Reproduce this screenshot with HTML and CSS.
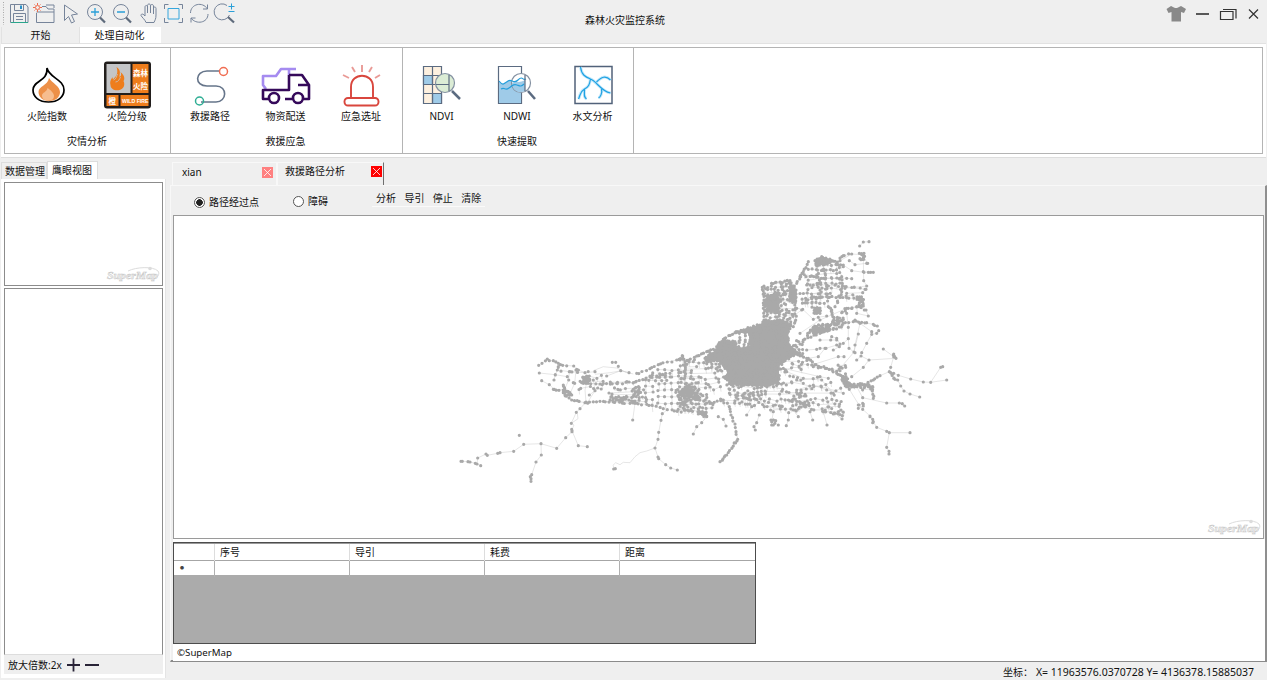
FILE: index.html
```html
<!DOCTYPE html>
<html lang="zh-CN">
<head>
<meta charset="utf-8">
<title>森林火灾监控系统</title>
<link rel="stylesheet" href="styles.css">
</head>
<body>
<header class="titlebar">
  <div class="lead">
    <div class="quick">
      <svg width="240" height="27" viewBox="0 0 240 27" fill="none" stroke="#76849a" stroke-width="1">
        <path d="M3.500 2v23" stroke="#a8a8a8" stroke-dasharray="1 1.500"/>
        <path d="M10.500 4.500H26l2 2.500v15.500H10.500z"/><path d="M14.500 4.500v6h9v-6M13.500 22v-8.500h12V22M16 16.500h7M16 19.500h7"/><path d="M11 22.500h17" stroke="#2aa58c"/><path d="M21 5.500v3.500" stroke="#2a90c8" stroke-width="2"/>
        <path d="M36.500 13v9.500h17.500v-13.500h-6l-2-2.500h-4M36.500 12h17.500M46 5h8v3"/><g stroke="#ee6b4d"><circle cx="37.500" cy="7.500" r="2"/><path d="M37.500 3v2m0 5v2M33 7.500h2m5 0h2M34.500 4.500l1 1m4 4l1 1m0-6l-1 1m-4 4l-1 1"/></g>
        <path d="M64.500 5l13 9-6 1 3 6.500-3 1.500-3-6.500-4 4z"/>
        <g><circle cx="95" cy="12" r="7.500"/><circle cx="121" cy="12" r="7.500"/><path d="M100 17.500l5 5M126 17.500l5 5" stroke="#5f6b7c" stroke-width="2.200"/><path d="M91 12h8m-4-4v8M117 12h8" stroke="#2a9fd8" stroke-width="1.300"/></g>
        <path d="M144 22.500c-1-3-4-5-5-7 0-2 2-2 4 .5V7c0-2 2.500-2 2.500 0v6V5.500c0-2 3-2 3 0V13V6c0-2 3-2 3 0v8V8.500c0-2 2.500-2 2.500 0V15C154 19 153 20 152 22.500z" transform="translate(2 0)"/>
        <path d="M164.500 9V4.500h4m10 0h4V9m0 9v4.500h-4m-10 0h-4V18"/><path d="M168 8.500h11v10.500h-11z" stroke="#35a6dd"/>
        <path d="M190.500 13c0-9 12-12 17-4m0-4.500V9h-4.500M208 14c0 9-12 11-17 4m0 4.500V18h4.500"/>
        <g transform="translate(1 0)"><path d="M226 5.500a8 8 0 1 0 2.500 9.500"/><path d="M227 17l6 5.500" stroke="#5f6b7c" stroke-width="2.200"/><path d="M227.500 6.500h6m-3-3v6m-3 2h6" stroke="#2a9fd8"/></g>
      </svg>
    </div>
    <nav class="ribbon-tabs"><span>开始</span><span class="on">处理自动化</span></nav>
  </div>
  <h1>森林火灾监控系统</h1>
  <svg class="win" width="105" height="28" viewBox="0 0 105 28" fill="none" stroke="#333" stroke-width="1.200">
    <path d="M10 6l3 1.500q2 1 4 0L20 6l5 3-2 4-3-1v9.500h-9.500v-9.500l-3 1-2-4z" fill="#898989" stroke="none"/>
    <path d="M35 14h13" stroke-width="1.600"/><path d="M59.500 11.500h12.500v8H59.500z"/><path d="M62 9.500h13v9"/><path d="M88 9.500l9 9m0-9l-9 9"/>
  </svg>
</header>

<section class="ribbon"><div class="ribbon-in">
  <div class="group g1">
    <div class="tools">
      <div class="tool"><svg viewBox="0 0 48 48"><path d="M23 7c2 10 17 11 17 22 0 7-6 12-15.500 12S9 36 9 29c0-10 15-8 14-22z" transform="translate(1 0)" fill="#fff" stroke="#000" stroke-width="1.700"/><path d="M26 17c3 5 11 8 11 14 0 5-4 9-11 9-6 0-10.500-4-10.500-9 0-6 9-6 10.500-14z" fill="#ed9048"/><path d="M24.500 27c3 2 6.500 5 6.500 8s-2 4.500-6 4.500-6-2-6-5 5-3.500 5.500-7.500z" fill="#f6bd8f"/></svg><span>火险指数</span></div>
      <div class="tool"><svg viewBox="0 0 48 48"><g transform="translate(.5 0)"><rect x=".5" y=".5" width="47" height="47" rx="3" fill="#221e1c"/><path d="M3 3h24v29H3z" fill="#c4c5c7"/><path d="M29 3h16v29H29zM3 34h12v11H3zM17 34h28v11H17z" fill="#ee7d1c"/><path d="M13 6c5 3 3 7 3 10 2-1 2-3 1-5 5 4 4 8 3 9 2 4 0 8-4 9-5 1-9-1-9-5-1-4 1-6 2-8 0 1 0 2 1 2 3-3 5-6 3-12z" fill="#ee7d1c"/><path d="M10 19c3-1 3-4 4-6m-2 8c3 0 4-3 5-5" fill="none" stroke="#c4c5c7" stroke-width=".8"/><g class="sign"><text x="29.500" y="14.500">森林</text><text x="29.500" y="28">火险</text><text x="5" y="42.500">橙</text><text x="18.500" y="41.500" class="wild">WILD FIRE</text></g></g></svg><span>火险分级</span></div>
    </div><b>灾情分析</b>
  </div>
  <div class="group g2">
    <div class="tools">
      <div class="tool"><svg viewBox="0 0 48 48" fill="none"><path d="M34 10H21c-12 0-13 15 0 15h9c12 0 11 16 0 16H15" stroke="#66758a" stroke-width="1.600"/><circle cx="37.500" cy="10.500" r="4" stroke="#f06d52" stroke-width="1.500"/><circle cx="13.500" cy="40" r="4" stroke="#2eae94" stroke-width="1.500"/></svg><span>救援路径</span></div>
      <div class="tool"><svg viewBox="0 0 48 48" fill="none" stroke-width="2.600" stroke-linejoin="round"><g transform="translate(-1 0)"><path d="M5 28l-3-4V15h13l5-7h15M28 8v6" stroke="#a58bf0"/><path d="M28 14h13l7 10v14h-5M28 14v15H2v9h5m11 0h-1m7 0h7M37 24h10" stroke="#35095a"/><circle cx="13" cy="37" r="5" stroke="#35095a"/><circle cx="37" cy="37" r="5" stroke="#35095a"/></g></svg><span>物资配送</span></div>
      <div class="tool"><svg viewBox="0 0 48 48" fill="none" stroke="#d9463d" stroke-width="1.900"><path d="M14 37V26c0-15 22-15 22 0v11"/><rect x="7.500" y="37" width="34" height="7.500" rx="3.500"/><path d="M25 4v7M15 6l3 5M6 14l6 3M35 6l-3 5M43 14l-5 3" stroke="#e99a96"/></svg><span>应急选址</span></div>
    </div><b>救援应急</b>
  </div>
  <div class="group g3">
    <div class="tools">
      <div class="tool"><svg viewBox="0 0 48 48" fill="none" stroke="#5b6b81" stroke-width="1.200"><path d="M5.500 5.500h18v37h-18z" fill="#fdf0df"/><path d="M5.500 14.500h9v9h-9zM14.500 32.500h9v10h-9z" fill="#9fcbe8"/><path d="M14.500 5.500v37M5.500 14.500h18M5.500 23.500h18M5.500 32.500h18"/><circle cx="27" cy="22" r="9.500" fill="#dbecd5" stroke="#8390a1"/><path d="M31 14v16M18 23.500h13"/><path d="M34 30l8 8" stroke-width="2.500"/></svg><span>NDVI</span></div>
      <div class="tool"><svg viewBox="0 0 48 48" fill="none" stroke="#5b6b81" stroke-width="1.200"><path d="M5.500 5.500h23v37h-23z" fill="#fff"/><path d="M6 20c4 5 5 3 9 0s5 3 13 0v22H6z" fill="#9fcbe8" stroke="none"/><circle cx="28" cy="22" r="9.500" fill="#fff" stroke="#8390a1"/><path d="M19 22c5-3 6 1 13-3v11c-6 3-13 0-13-8z" fill="#9fcbe8" stroke="none"/><path d="M6 20c4 5 5 3 9 0s5 4 10-1 4 1 8-1M8 28c4-2 4 2 8-1s5-4 8-3 4 2 7-1" stroke="#249edb"/><path d="M32 14v16"/><path d="M35 30l7 8" stroke-width="2.500"/></svg><span>NDWI</span></div>
      <div class="tool"><svg viewBox="0 0 48 48" fill="none"><g transform="translate(.5 0)"><path d="M5.500 5.500h37v37h-37z" fill="#fff" stroke="#51627a" stroke-width="1.500"/><path d="M11 6c1 8 5 10 10 12 6 2 10 12 20 14M21 18c-1 6-2 8-6 10-5 3-4 6-6 10M15 28c0 6-1 8 2 10M27 21c5-5 9-7 14-2M32 28c1 4-1 8-3 9" stroke="#c5e8fa" stroke-width="3"/><path d="M11 6c1 8 5 10 10 12 6 2 10 12 20 14M21 18c-1 6-2 8-6 10-5 3-4 6-6 10M15 28c0 6-1 8 2 10M27 21c5-5 9-7 14-2M32 28c1 4-1 8-3 9" stroke="#1fa2e3" stroke-width="1.200"/></g></svg><span>水文分析</span></div>
    </div><b>快速提取</b>
  </div>
</div></section>

<main>
  <aside>
    <nav class="side-tabs"><span>数据管理</span><span class="on">鹰眼视图</span></nav>
    <div class="side-body">
      <div class="eagle"><svg class="logo" width="56" height="20" viewBox="0 0 56 20"><path d="M22 6C30 2 47 1 52 6c2 3 0 6-4 8" fill="none" stroke="#dcdcdc"/><circle cx="44" cy="3.500" r="1.800" fill="#dcdcdc"/><text x="1" y="14" class="mark" textLength="51" lengthAdjust="spacingAndGlyphs">SuperMap</text></svg></div>
      <div class="blank"></div>
      <div class="zoom"><span>放大倍数:2x</span><svg width="36" height="16" fill="none" stroke="#292437" stroke-width="1.800"><path d="M1 8h13M7.500 1.500v13M19 8h14"/></svg></div>
    </div>
  </aside>
  <section class="work">
    <nav class="doc-tabs">
      <span class="doc d1">xian<svg class="x" viewBox="0 0 11 11"><path d="M2 2l7 7m0-7l-7 7"/></svg></span>
      <span class="doc d2">救援路径分析<svg class="x" viewBox="0 0 11 11"><path d="M2 2l7 7m0-7l-7 7"/></svg></span>
    </nav>
    <div class="doc-body">
      <div class="options">
        <label class="r1"><i class="radio sel"></i>路径经过点</label>
        <label class="r2"><i class="radio"></i>障碍</label>
        <div class="menu"><span>分析</span><span>导引</span><span>停止</span><span>清除</span></div>
      </div>
      <div class="map">
        <svg id="net" viewBox="174 217 1089 322" width="1089" height="322"></svg>
        <svg class="logo" width="56" height="20" viewBox="0 0 56 20"><path d="M22 6C30 2 47 1 52 6c2 3 0 6-4 8" fill="none" stroke="#dcdcdc"/><circle cx="44" cy="3.500" r="1.800" fill="#dcdcdc"/><text x="1" y="14" class="mark" textLength="51" lengthAdjust="spacingAndGlyphs">SuperMap</text></svg>
      </div>
      <div class="result">
        <div class="grid">
          <div class="row head"><span></span><span>序号</span><span>导引</span><span>耗费</span><span>距离</span></div>
          <div class="row"><span class="dot">●</span><span></span><span></span><span></span><span></span></div>
        </div>
        <p>©SuperMap</p>
      </div>
    </div>
    <footer><span>坐标：</span><span class="xy">X= 11963576.0370728 Y= 4136378.15885037</span></footer>
  </section>
</main>
<script src="network.js"></script>
</body>
</html>
```

FILE: styles.css
```css
* { box-sizing: border-box; }
body { margin: 0; width: 1267px; height: 680px; overflow: hidden; display: flex; flex-direction: column; background: #efefef; color: #111; font: 10px/14px "Noto Sans", "Noto Sans CJK SC", sans-serif; }
svg { display: block; }
.mark { font: italic bold 11px "Liberation Serif", serif; fill: #f0f0f0; stroke: #c6c6c6; stroke-width: .45; }

.titlebar { height: 43px; flex: none; display: grid; grid-template-columns: 250px 750px 1fr; }
.titlebar h1 { margin: 13px 0 0; font-size: 10px; font-weight: 400; text-align: center; }
.quick { height: 27px; }
.ribbon-tabs { display: flex; height: 17px; padding-left: 1px; }
.ribbon-tabs span { width: 78px; text-align: center; line-height: 17px; border-left: 1px solid #e2e2e2; }
.ribbon-tabs .on { width: 82px; background: #fff; line-height: 16px; padding-right: 2px; }
.win { margin-left: 161px; }

.ribbon { height: 115px; flex: none; margin: 0 1px; padding: 3px 3px 4px 3px; background: #fff; border-bottom: 1px solid #ddd; border-top: 1px solid #e2e2e2; }
.ribbon-in { height: 107px; display: flex; border: 1px solid #b4b4b4; }
.group { display: flex; flex-direction: column; align-items: center; border-right: 1px solid #b4b4b4; }
.g1 { width: 166px; padding-right: 1px; }
.g2 { width: 232px; padding-right: 2px; }
.g3 { width: 231px; padding-right: 2px; }
.tools { display: flex; padding-top: 13px; }
.tool { width: 75.500px; text-align: center; }
.g1 .tool { width: 80px; }
.tool svg { width: 48px; height: 48px; margin: 0 auto; overflow: visible; }
.tool span { display: block; line-height: 14px; }
.group b { font-weight: 400; margin-top: 11px; }
.sign { fill: #fff; font: bold 7.500px/1 "Noto Sans CJK SC", sans-serif; }
.wild { font: bold 5.200px/1 "Liberation Sans", sans-serif; }

main { flex: 1; display: flex; min-height: 0; }
aside { width: 170px; padding: 3px 4px 2px 1px; display: flex; flex-direction: column; }
.side-tabs { display: flex; height: 18px; flex: none; align-items: flex-end; }
.side-tabs span { width: 46px; height: 17px; padding-left: 3px; border: 1px solid #ddd; border-bottom: 0; line-height: 16px; white-space: nowrap; }
.side-tabs .on { width: 51px; height: 18px; background: #fff; line-height: 16px; padding-left: 4px; }
.side-body { flex: 1; display: flex; flex-direction: column; background: #fff; padding: 3px 2px 4px 3px; border-right: 1px solid #e4e4e4; }
.eagle { height: 104px; width: 159px; border: 1px solid #8c8c8c; display: flex; justify-content: flex-end; align-items: flex-end; padding: 0; }
.blank { flex: 1; margin-top: 2px; width: 159px; border: 1px solid #8c8c8c; border-bottom-color: #ddd; }
.zoom { display: flex; align-items: center; height: 19px; width: 159px; background: #efefef; padding-left: 4px; gap: 4px; }

.work { flex: 1; display: flex; flex-direction: column; padding-top: 4px; min-width: 0; }
.doc-tabs { display: flex; height: 24px; flex: none; padding-left: 2px; }
.doc { display: flex; justify-content: space-between; border: 1px solid #f8f8f8; border-bottom: 0; }
.d1 { width: 105px; padding: 2px 3px 0 9px; }
.d2 { width: 107px; padding: 1px 1px 0 7px; border-right: 1px solid #6f6f6f; }
.x { width: 11px; height: 11px; background: #f00; stroke: #fff; stroke-width: .8; }
.d1 .x { background: #ff8080; margin-top: 2px; }
.d2 .x { margin-top: 2px; }
.doc-body { height: 477px; flex: none; display: flex; flex-direction: column; border: 1px solid #f8f8f8; border-bottom: 2px solid #8b8b8b; border-right: 2px solid #8f8f8f; padding-left: 2px; margin-top: -1px; padding-bottom: 0; }
.options { display: flex; height: 29px; flex: none; align-items: flex-start; }
label { display: flex; align-items: center; gap: 4px; height: 14px; }
.r1 { margin: 9px 0 0 21px; width: 99px; }
.r2 { margin-top: 8px; width: 79px; }
.radio { width: 11px; height: 11px; border: 1px solid #555; border-radius: 50%; background: #fff; }
.sel { background: radial-gradient(circle, #222 0 3px, #fff 3.600px); }
.menu { display: flex; gap: 8.400px; height: 17px; margin-top: 4px; padding: 1px 4px 0; border-bottom: 1px solid #fafafa; }
.map { position: relative; height: 324px; width: 1091px; flex: none; background: #fff; border: 1px solid #9a9a9a; }
.map .logo { position: absolute; right: 0; bottom: 0; }
.result { flex: 1; background: #fff; padding-top: 3px; }
.result p { margin: 1px 0 0 4px; line-height: 16px; font-size: 9.700px; }
.grid { width: 583px; height: 102px; background: #ababab; border: 1px solid #4c4c4c; }
.row { display: grid; grid-template-columns: 41px 135px 135px 135px 1fr; height: 14px; background: #fff; }
.row span { border-right: 1px solid #b0b0b0; }
.row span:last-child { border-right: 0; }
.head { height: 18px; line-height: 17px; border-bottom: 1px solid #a6a6a6; border-top: 1px solid #999; }
.head span { padding-left: 5px; border-color: #ddd; }
.dot { font-size: 4px; line-height: 16px; padding-left: 6px; color: #444; }
footer { display: flex; justify-content: flex-end; gap: 3px; padding: 2px 13px 0 0; line-height: 17px; white-space: nowrap; }
.xy { font-size: 10.500px; }
.road { fill: none; stroke: #cdcdcd; stroke-width: .5; }
.node { fill: none; stroke: #a9a9a9; stroke-width: 3.200; stroke-linecap: round; }
.mass { fill: #a9a9a9; stroke: #a9a9a9; stroke-width: 1; stroke-linejoin: round; }
```

FILE: network.js
```js
// Road network of the Xi'an area: nodes, connecting roads and dense districts.
let seed = 7;
const rnd = () => (seed = (seed * 16807) % 2147483647) / 2147483647;
let roads = '', nodes = '', masses = '';
let ox = 0, oy = 0;
const P = (x, y) => (ox + x / 3).toFixed(1) + ' ' + (oy + y / 3).toFixed(1);
const parse = s => s.trim().split(/\s+/).map(p => p.split(',').map(Number));
const dot = (x, y) => { nodes += 'M' + P(x, y) + 'h.01'; };
const line = (pts) => { roads += 'M' + pts.map(p => P(p[0], p[1])).join('L'); };

// A road with a node on every vertex; extra > 0 spreads more nodes along it.
function road(s, extra = 0) {
  const pts = parse(s);
  line(pts);
  pts.forEach(p => dot(p[0], p[1]));
  if (extra) for (let i = 1; i < pts.length; i++) {
    const [a, b] = [pts[i - 1], pts[i]];
    const n = Math.floor(Math.hypot(b[0] - a[0], b[1] - a[1]) / extra);
    for (let k = 1; k <= n; k++) {
      const t = (k - rnd() * .6) / (n + 1);
      dot(a[0] + (b[0] - a[0]) * t + rnd() * 5 - 2.5, a[1] + (b[1] - a[1]) * t + rnd() * 5 - 2.5);
    }
  }
}
const inside = (x, y, g) => {
  let r = false;
  for (let i = 0, j = g.length - 1; i < g.length; j = i++)
    if ((g[i][1] > y) !== (g[j][1] > y) && x < (g[j][0] - g[i][0]) * (y - g[i][1]) / (g[j][1] - g[i][1]) + g[i][0]) r = !r;
  return r;
};
// Street blocks inside a polygon.
function blocks(s, step, prob, jit) {
  const g = parse(s), xs = g.map(p => p[0]), ys = g.map(p => p[1]);
  for (let y = Math.min(...ys); y <= Math.max(...ys); y += step) {
    let prev = null;
    for (let x = Math.min(...xs); x <= Math.max(...xs); x += step) {
      if (!inside(x, y, g)) { prev = null; continue; }
      if (rnd() > prob) continue;
      const q = [x + (rnd() - .5) * jit, y + (rnd() - .5) * jit];
      dot(q[0], q[1]);
      if (prev) line([prev, q]);
      if (rnd() < .6) line([q, [q[0] + 2, q[1] + step]]);
      prev = q;
    }
  }
}
function mass(s) {
  const g = parse(s);
  masses += 'M' + g.map(p => P(p[0], p[1])).join('L') + 'Z';
  blocks(s, 9, .8, 12);
  road(s + ' ' + g[0].join(','), 10);
}

// Western districts
ox = 450; oy = 340;
['33,364 37,364 54,365 60,366 76,370 81,372 92,377', '83,354 108,342 112,346 143,340 150,338 191,334 221,313 273,311 320,325 347,293 366,275 365,268',
 '83,354 81,372', '273,311 274,345 258,366 245,404 241,410 243,416 243,424', '364,250 379,217 390,206 408,186', '366,272 385,317 412,320', '208,286',
 '555,190 548,240', '652,209 637,221 633,241 626,277 624,298 615,324 624,351 626,356 647,374 662,384 682,390', '491,387 496,386', '487,67 497,67', '505,79',
 '275,122 298,134 313,148', '268,99 316,104 352,110', '358,95 356,120 343,150', '378,90 374,130 358,165', '325,80 316,105 312,120', '430,120 435,152 418,165', '470,108 512,92 537,98'].forEach(s => road(s));
line(parse('364,250 384,236 382,220')); line(parse('366,268 372,255 364,250'));
line(parse('615,324 590,333 570,338 555,350 540,368 520,367 510,374 497,368 489,376 493,386'));
line(parse('408,186 405,150 412,120')); line(parse('412,188 435,152 455,125'));
line(parse('430,92 460,80 500,84 530,98')); line(parse('435,103 480,98 515,92 550,102'));
road('266,76 276,70 292,57 298,62 310,62 325,70 338,76', 14);
road('338,76 371,78 380,88 405,98 435,95', 22);
road('325,82 322,90 360,95 405,98', 20);
road('310,148 340,150 345,162 365,180 405,188 450,184 490,186 540,190 590,193 640,206', 11);
road('340,135 345,165 365,165 355,155 340,158', 6);
road('560,100 600,86 625,74 652,66', 12);
road('652,66 680,60 697,47 700,75 730,65 745,47', 20);
road('395,128 450,132 500,130 550,128 600,108 660,100', 12);
mass('398,112 410,108 419,118 414,130 400,130');
blocks('345,100 395,100 395,155 345,150', 15, .4, 12);
blocks('395,100 440,100 480,130 480,150 420,152 395,145', 11, .45, 10);
blocks('470,125 590,120 590,190 480,190', 9, .38, 8);
blocks('480,172 545,172 545,186 480,186', 8, .9, 6);
blocks('548,145 572,145 572,188 548,188', 9, .8, 6);
blocks('588,92 625,78 625,205 588,190', 20, .85, 4);
blocks('625,78 690,72 750,70 750,218 640,208 625,200', 20, .92, 4);
blocks('690,65 750,65 750,218 690,218', 16, .6, 8);
blocks('588,100 665,90 665,120 588,130', 10, .5, 6);
blocks('670,150 750,135 750,180 690,175', 8, .75, 5);
blocks('660,195 750,190 750,222 665,213', 11, .6, 6);
mass('700,150 725,146 730,158 718,165 702,162');

// City core and eastern districts
ox = 680; oy = 230;
mass('168,308 240,287 250,275 300,272 332,282 322,320 328,345 365,377 345,372 315,392 295,408 296,460 245,466 205,465 155,462 136,445 145,425 125,400 105,388 80,400 75,385 105,365 120,340 135,332 165,335 168,355 213,352 213,308 172,306');
mass('260,198 292,190 295,245 262,245');
mass('330,172 348,180 346,214 328,210');
mass('405,92 425,80 465,94 440,100 408,104');
mass('404,234 420,234 420,250 404,250');
mass('482,436 498,440 504,458 520,468 505,471 492,460');
mass('54,545 78,546 80,558 55,552');
road('177,308 180,330 176,350', 10); road('193,306 196,330 192,352', 10); road('207,308 210,330 207,350', 9);
blocks('247,172 280,155 335,152 350,175 350,220 340,270 250,270', 9, .8, 8);
road('247,172 252,210 252,270', 9); road('330,152 345,210 347,270 340,290', 9);
road('275,160 300,156 330,152', 9);
blocks('355,160 372,118 400,92 485,96 488,170 450,205 420,220 360,218', 14, .62, 8);
blocks('350,190 440,190 445,225 400,240 350,225', 14, .6, 8);
blocks('375,312 400,288 455,278 460,262 488,262 488,290 430,304 380,320', 8, .88, 6);
blocks('400,290 455,278 450,300 400,310', 6, .9, 5);
blocks('460,265 488,262 488,290 460,288', 9, .9, 6);
blocks('345,325 372,330 370,375 340,368', 9, .75, 6);
blocks('70,375 110,360 145,430 120,425 75,408', 10, .6, 10);
blocks('0,385 70,390 115,420 140,440 130,475 80,500 0,490', 15, .65, 10);
blocks('0,470 35,470 40,500 0,500', 8, .85, 6);
blocks('0,500 80,500 110,530 80,555 0,548', 11, .6, 8);
blocks('110,505 205,475 245,475 250,500 200,530 120,530', 11, .7, 9);
blocks('130,460 330,450 350,500 310,540 200,530 135,480', 12, .65, 13);
blocks('225,515 330,530 410,525 490,540 490,565 410,545 290,545', 10, .8, 11);
blocks('325,490 380,490 395,530 340,540', 8, .8, 9);
blocks('295,390 360,380 400,400 370,425 300,430', 12, .65, 11);
blocks('295,420 345,440 440,450 490,480 440,505 340,490', 14, .55, 14);
blocks('500,460 560,455 580,475 580,500 570,480 520,478', 8, .75, 6);
blocks('360,510 490,510 495,560 400,540', 11, .6, 11);
blocks('465,180 545,180 550,235 500,235 470,225', 17, .4, 10);
blocks('530,200 548,200 550,232 532,232', 8, .8, 5);
blocks('475,408 500,408 500,435 475,435', 11, .6, 6);

['567,35 550,36 539,48', '480,92 515,72 545,74 563,100', '508,92 525,104 560,100', '550,125 565,127 572,127 580,127', '490,105 515,122 552,127',
 '550,85 551,152 560,168', '495,175 523,172 560,168', '500,190 548,188 558,178', '530,250 565,258 558,240', '500,250 505,292 505,326', '525,270 540,280 575,305',
 '596,302 590,310 575,313 560,340 545,368', '535,312 522,366 483,412', '540,280 525,345 522,366', '610,357 641,380 648,385 567,390 543,378',
 '420,330 452,330 470,330', '420,355 438,355 470,345', '410,358 380,360', '385,385 415,380 435,355', '395,405 475,380 492,380', '567,390 550,412 515,440', '530,390 543,378',
 '600,437 628,425 632,412 641,380', '628,425 641,430 655,436 692,447 730,456 752,457 800,450', '752,457 782,412 788,410',
 '641,445 653,450 662,468 672,483 690,492 719,501', '530,470 548,503 620,519 658,519 667,521 674,528', '508,478 537,525 548,538 570,558 580,575 590,592 620,604 628,608 690,608', '628,608 620,652 627,664 627,672',
 '40,612 50,590 65,578 80,560', '115,560 130,568 138,588', '238,555 230,578 222,590 226,600', '280,545 275,575 275,585', '326,548 325,570 319,587', '340,540 355,560', '390,545 398,570', '430,545 441,585', '215,530 200,555', '465,550 486,567', '295,585', '320,425 370,445 425,450 460,490', '310,415 420,440 445,445', '350,480 400,465 440,480 490,490', '350,235 368,238 400,268', '330,265 365,240', '360,310 420,270 500,235',
 '460,360 478,350 490,340 505,326 507,355 525,368', '548,520 550,528 535,535', '570,560 578,568 578,578', '455,320 470,325 480,342', '400,268 415,262 440,258', '340,440 350,450 370,460', '535,525 550,522'].forEach(s => road(s));
road('480,84 490,77 515,72', 12);
road('360,140 370,125 385,95', 9);
road('335,180 350,160 362,140', 9);
road('538,70 552,70 551,88 540,86', 5);
road('535,208 548,208 550,228 538,230', 5);
road('485,248 505,235 540,228 553,240', 10);
road('490,280 520,275 545,277 580,283 592,288', 12);
road('370,330 420,310 460,298', 9);
road('350,370 380,385 405,404 440,415 470,430 490,440', 9);
road('405,404 400,410 480,422', 24);
road('470,430 480,412 497,412', 13);
road('445,230 455,240 462,270', 6);
road('430,105 437,160 445,230', 12);
road('412,108 420,180 420,220', 14);
road('472,96 485,140 485,185 465,230', 12);
road('380,165 440,165 495,170 555,178', 14);
road('378,210 440,200 500,203 545,208', 12);
road('378,140 430,145 500,145 515,146', 16);
road('385,118 460,122 490,110', 17);
road('500,470 550,465 580,450 600,437', 8);
road('641,372 645,382', 4); road('632,428 645,448', 5);
road('578,470 580,505', 6);
road('148,530 153,555 165,582 168,605 173,628', 12);
road('173,628 160,648 140,675 120,695', 7);
road('0,390 8,378 15,395 50,378 80,365 100,358', 9);
road('110,350 130,328 165,308 240,285', 8);
road('273,570 287,572 280,585', 5);
road('0,520 40,505 90,520 130,510', 9);

document.getElementById('net').innerHTML =
  `<g transform="translate(0 1)"><path class="road" d="${roads}"/><path class="mass" d="${masses}"/><path class="node" d="${nodes}"/></g>`;
```
